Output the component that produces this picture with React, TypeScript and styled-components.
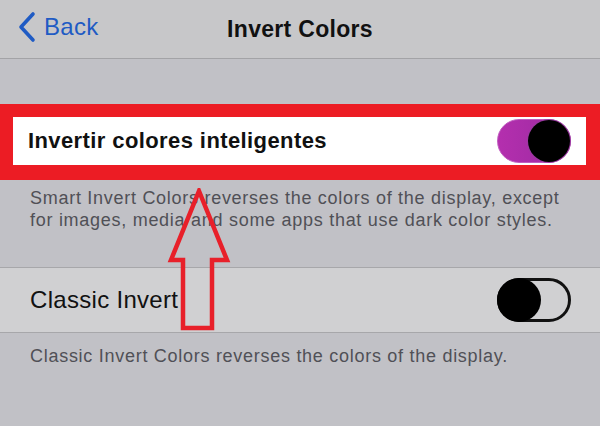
import React, { FC, ReactElement } from "react";
import styled, { createGlobalStyle } from "styled-components";

const GlobalStyle = createGlobalStyle`
  html, body {
    margin: 0;
    padding: 0;
    background: #c1c1c6;
  }
  body {
    font-family: "Liberation Sans", Arial, sans-serif;
  }
`;

const Switch: FC<{ on?: boolean }> = ({ on }): ReactElement => (
  <Track $on={on}>
    <Knob $on={on} />
  </Track>
);

const App: FC = (): ReactElement => {
  return (
    <>
      <GlobalStyle />
      <Page>
        <NavBar>
          <BackButton>
            <svg width="22" height="32" viewBox="0 0 22 32">
              <path
                d="M17 3 L5 16 L17 29"
                fill="none"
                stroke="#1f5bc4"
                strokeWidth="3.6"
                strokeLinecap="round"
                strokeLinejoin="round"
              />
            </svg>
            <BackLabel>Back</BackLabel>
          </BackButton>
          <Title>Invert Colors</Title>
        </NavBar>

        <Spacer />

        <HighlightRow>
          <RowLabel $bold>Invertir colores inteligentes</RowLabel>
          <Switch on />
        </HighlightRow>
        <Footnote $top={7} $bottom={36}>
          Smart Invert Colors reverses the colors of the display, except
          <br />
          for images, media and some apps that use dark color styles.
        </Footnote>

        <Row>
          <RowLabel>Classic Invert</RowLabel>
          <Switch />
        </Row>
        <Footnote $top={12} $bottom={40}>
          Classic Invert Colors reverses the colors of the display.
        </Footnote>

        <Arrow width="70" height="150" viewBox="0 0 70 150">
          <path
            d="M35 3 L63 72 L48 72 L48 140 L19 140 L19 72 L7 72 Z"
            fill="none"
            stroke="#e8202a"
            strokeWidth="4.5"
            strokeLinejoin="miter"
          />
        </Arrow>
      </Page>
    </>
  );
};

export default App;

const Page = styled.div`
  position: relative;
  width: 600px;
  height: 426px;
  overflow: hidden;
  background: #c1c1c6;
`;

const NavBar = styled.div`
  position: relative;
  height: 58px;
  display: flex;
  align-items: center;
  justify-content: center;
  background: #c7c7c9;
  border-bottom: 1px solid #a3a3a6;
`;

const BackButton = styled.div`
  position: absolute;
  left: 16px;
  top: 11px;
  display: flex;
  align-items: center;
  gap: 6px;
`;

const BackLabel = styled.span`
  color: #1f5bc4;
  font-size: 24px;
  line-height: 32px;
  letter-spacing: 0.3px;
`;

const Title = styled.div`
  color: #111;
  font-size: 23px;
  font-weight: 700;
  letter-spacing: 0.3px;
`;

const Spacer = styled.div`
  height: 45px;
`;

const HighlightRow = styled.div`
  height: 48px;
  display: flex;
  align-items: center;
  justify-content: space-between;
  padding: 0 15px 0 15px;
  background: #ffffff;
  border: 13px solid #ec1c24;
  border-right-width: 14px;
  border-bottom-width: 15px;
`;

const Row = styled.div`
  height: 64px;
  display: flex;
  align-items: center;
  justify-content: space-between;
  padding: 0 29px 0 30px;
  background: #d0d0d2;
  border-top: 1px solid #a7a7aa;
  border-bottom: 1px solid #a7a7aa;
`;

const RowLabel = styled.span<{ $bold?: boolean }>`
  color: #111;
  font-size: ${(p) => (p.$bold ? "22px" : "24px")};
  font-weight: ${(p) => (p.$bold ? 700 : 400)};
  letter-spacing: ${(p) => (p.$bold ? "0.4px" : "0.3px")};
`;

const Footnote = styled.div<{ $top: number; $bottom: number }>`
  padding: ${(p) => p.$top}px 20px ${(p) => p.$bottom}px 30px;
  color: #505056;
  font-size: 18px;
  line-height: 22px;
  letter-spacing: 0.72px;
  white-space: nowrap;
`;

const Track = styled.div<{ $on?: boolean }>`
  position: relative;
  box-sizing: border-box;
  width: 74px;
  height: 44px;
  border-radius: 22px;
  background: ${(p) =>
    p.$on ? "linear-gradient(90deg, #b42fae, #a52ca6 60%, #8f3c9c)" : "transparent"};
  border: ${(p) => (p.$on ? "1px solid #c15cc0" : "3px solid #111")};
`;

const Knob = styled.div<{ $on?: boolean }>`
  position: absolute;
  top: ${(p) => (p.$on ? "0px" : "-3px")};
  ${(p) => (p.$on ? "right: 0px;" : "left: -3px;")}
  width: ${(p) => (p.$on ? "42px" : "44px")};
  height: ${(p) => (p.$on ? "42px" : "44px")};
  border-radius: 50%;
  background: #000;
  box-shadow: ${(p) => (p.$on ? "0 0 0 1px #9a3aa0" : "none")};
`;

const Arrow = styled.svg`
  position: absolute;
  left: 164px;
  top: 188px;
`;
